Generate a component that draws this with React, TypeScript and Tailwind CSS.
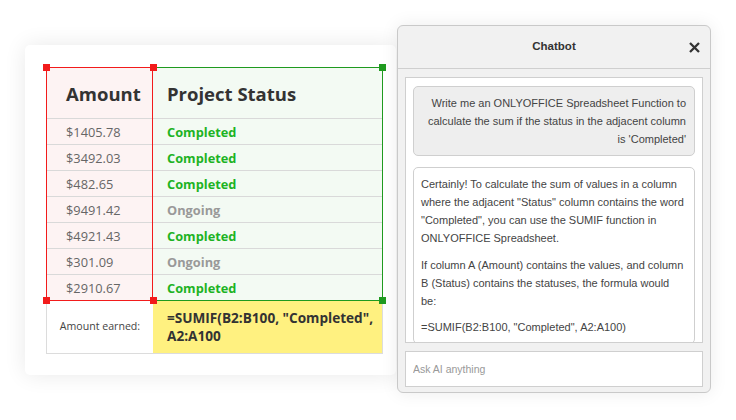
import React from "react";

type Row = { amount: string; status: "Completed" | "Ongoing" };

const rows: Row[] = [
  { amount: "$1405.78", status: "Completed" },
  { amount: "$3492.03", status: "Completed" },
  { amount: "$482.65", status: "Completed" },
  { amount: "$9491.42", status: "Ongoing" },
  { amount: "$4921.43", status: "Completed" },
  { amount: "$301.09", status: "Ongoing" },
  { amount: "$2910.67", status: "Completed" },
];

function Handle({ className }: { className: string }) {
  return <span className={`absolute w-[7px] h-[7px] ${className}`} />;
}

function Sheet() {
  return (
    <div className="mt-[45px] w-[371px] h-[330px] shrink-0 rounded-[5px] bg-white shadow-[0_0_22px_rgba(0,0,0,0.09)] pl-[21px] pt-[22px] font-['Open_Sans',sans-serif]">
      <div className="relative w-[337px]">
        <div className="flex h-[234px]">
          <div className="w-[107px] border border-[#f21b1b] bg-[#fdf3f3]">
            <div className="h-[50px] flex items-center pl-[19px] pt-[1px] text-[18.5px] font-bold text-[#333]">
              Amount
            </div>
            {rows.map((r) => (
              <div
                key={r.amount}
                className="h-[26px] border-t border-[#d9d9d9] flex items-center pl-[19px] pt-[2px] text-[12.8px] text-[#666]"
              >
                {r.amount}
              </div>
            ))}
          </div>
          <div className="flex-1 border border-l-0 border-[#1f9a1f] bg-[#f3faf3]">
            <div className="h-[50px] flex items-center pl-[14px] pt-[1px] text-[18.5px] font-bold text-[#333]">
              Project Status
            </div>
            {rows.map((r, i) => (
              <div
                key={i}
                className={`h-[26px] border-t border-[#d9d9d9] flex items-center pl-[14px] pt-[2px] text-[12.8px] font-bold ${
                  r.status === "Completed" ? "text-[#1db324]" : "text-[#999]"
                }`}
              >
                {r.status}
              </div>
            ))}
          </div>
        </div>
        <div className="flex h-[53px] border-x border-b border-[#dcdcdc]">
          <div className="w-[106px] flex items-center justify-center text-[10.6px] text-[#444]">
            Amount earned:
          </div>
          <div className="flex-1 bg-[#fff180] pl-[14px] pt-[8px] text-[13.6px] leading-[18px] font-bold text-[#333]">
            =SUMIF(B2:B100, "Completed",
            <br />
            A2:A100
          </div>
        </div>
        <Handle className="bg-[#f21b1b] -left-[3px] -top-[3px]" />
        <Handle className="bg-[#f21b1b] left-[104px] -top-[3px]" />
        <Handle className="bg-[#1f9a1f] -right-[3px] -top-[3px]" />
        <Handle className="bg-[#f21b1b] -left-[3px] top-[230px]" />
        <Handle className="bg-[#f21b1b] left-[104px] top-[230px]" />
        <Handle className="bg-[#1f9a1f] -right-[3px] top-[230px]" />
      </div>
    </div>
  );
}

function Chatbot() {
  return (
    <div className="mt-[25px] ml-[1px] w-[314px] h-[368px] shrink-0 rounded-[6px] border border-[#c9c9c9] bg-[#f1f1f1] shadow-[0_0_18px_rgba(0,0,0,0.08)] flex flex-col font-['Liberation_Sans',Arial,sans-serif]">
      <div className="h-[43px] shrink-0 border-b border-[#cfcfcf] relative flex items-center justify-center">
        <span className="text-[11.5px] font-bold text-[#333]">Chatbot</span>
        <svg
          className="absolute right-[10px] top-[16px]"
          width="11"
          height="11"
          viewBox="0 0 11 11"
        >
          <path d="M1 1L10 10M10 1L1 10" stroke="#333" strokeWidth="2.3" />
        </svg>
      </div>
      <div className="flex-1 flex flex-col px-[7px] pt-[8px] pb-[5px] gap-[8px]">
        <div className="h-[266px] shrink-0 overflow-hidden border border-[#cfcfcf] bg-white px-[7px] pt-[8px] flex flex-col gap-[11px] text-[11px] leading-[18px] text-[#444]">
          <div className="shrink-0 rounded-[5px] border border-[#cfcfcf] bg-[#eeeeee] pl-[12px] pr-[8px] pt-[7px] pb-[7px] text-right">
            Write me an ONLYOFFICE Spreadsheet Function to calculate the sum if the status in the adjacent column is 'Completed'
          </div>
          <div className="shrink-0 rounded-[5px] border border-[#cfcfcf] bg-white pl-[7px] pr-[8px] pt-[7px] pb-[7px]">
            <p>
              Certainly! To calculate the sum of values in a column where the adjacent "Status" column contains the word "Completed", you can use the SUMIF function in ONLYOFFICE Spreadsheet.
            </p>
            <p className="mt-[9px]">
              If column A (Amount) contains the values, and column B (Status) contains the statuses, the formula would be:
            </p>
            <p className="mt-[8px]">=SUMIF(B2:B100, "Completed", A2:A100)</p>
          </div>
        </div>
        <input
          className="h-[36px] shrink-0 border border-[#cfcfcf] bg-white px-[7px] text-[10.5px] text-[#444] placeholder:text-[#999] outline-none"
          placeholder="Ask AI anything"
        />
      </div>
    </div>
  );
}

export default function App() {
  return (
    <div className="w-[736px] h-[420px] bg-white flex items-start pl-[25px] overflow-hidden">
      <Sheet />
      <Chatbot />
    </div>
  );
}
